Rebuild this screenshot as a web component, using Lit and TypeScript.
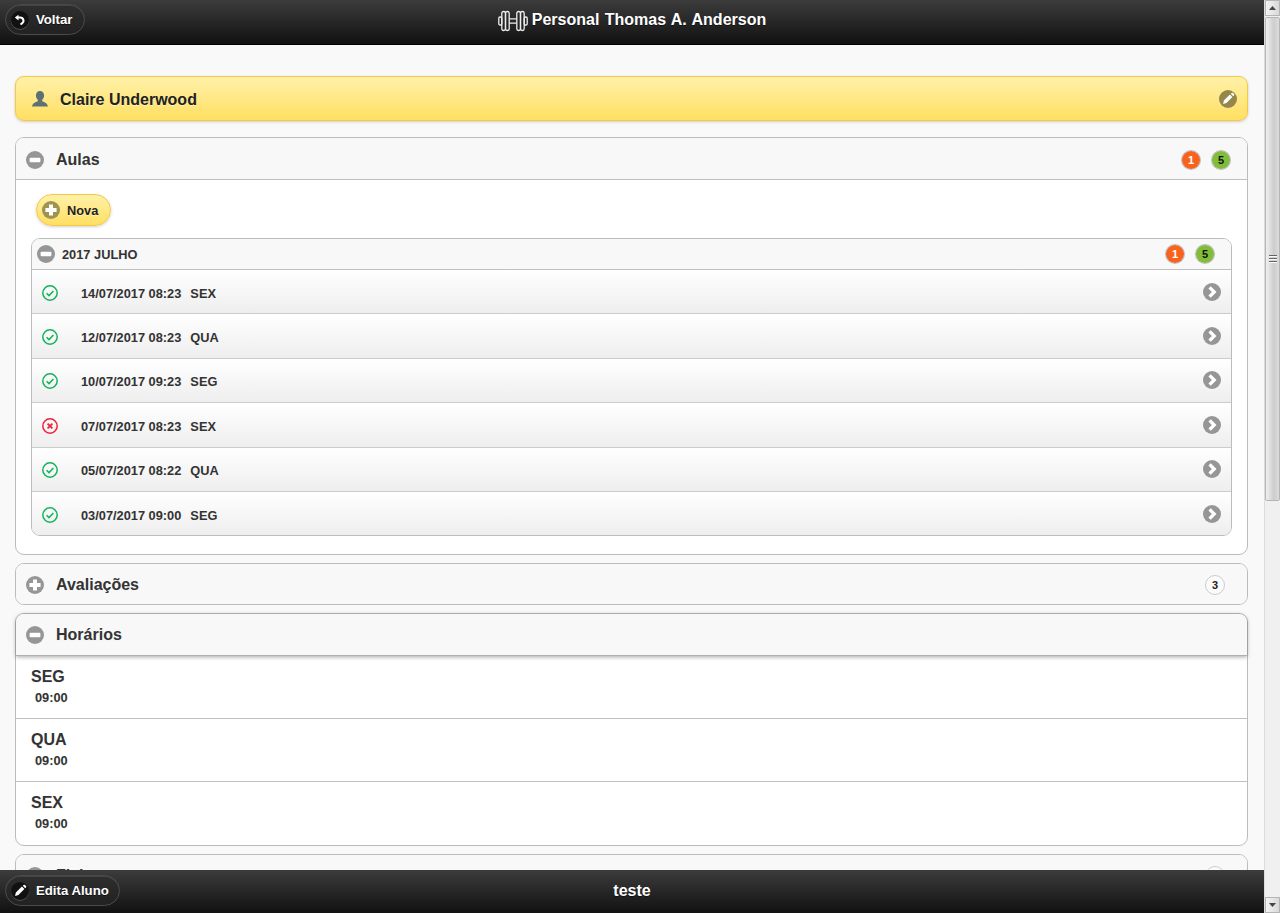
import { LitElement, html, css, svg } from "lit";
import { customElement } from "lit/decorators.js";

const disc = (inner: unknown, size = 18, fill = "#969696", cls = "") => html`<svg class=${cls} width=${size} height=${size} viewBox="0 0 18 18" aria-hidden="true"><circle cx="9" cy="9" r="9" fill=${fill}></circle>${inner}</svg>`;
const minus = svg`<rect x="3.6" y="6.8" width="10.8" height="4.4" rx="1" fill="#fff"/>`;
const plus = svg`<path d="M7 3.400h4V7h3.600v4H11v3.600H7V11H3.400V7H7z" fill="#fff"/>`;
const chevron = svg`<path d="M6.600 4.400 11.200 9l-4.600 4.600" fill="none" stroke="#fff" stroke-width="3.300"/>`;
const pencil = svg`<path d="M4 14l.9-3.400 6-6 2.500 2.500-6 6zM11.800 3.800l.8-.8a1 1 0 0 1 1.400 0l1 1a1 1 0 0 1 0 1.400l-.8.8z" fill="#fff"/>`;

const okIcon = html`<svg class="st" width="16" height="16" viewBox="0 0 16 16" aria-hidden="true"><circle cx="8" cy="8" r="7.200" fill="none" stroke="#12b35d" stroke-width="1.500"></circle><path d="M4.600 8.200l2.400 2.400 4.400-4.600" fill="none" stroke="#12b35d" stroke-width="1.500"></path></svg>`;
const noIcon = html`<svg class="st" width="16" height="16" viewBox="0 0 16 16" aria-hidden="true"><circle cx="8" cy="8" r="7.200" fill="none" stroke="#f0203a" stroke-width="1.500"></circle><path d="M5.600 5.600l4.800 4.800M10.400 5.600l-4.800 4.800" fill="none" stroke="#f0203a" stroke-width="1.800"></path></svg>`;

const rows = [
  ["14/07/2017 08:23", "SEX", true],
  ["12/07/2017 08:23", "QUA", true],
  ["10/07/2017 09:23", "SEG", true],
  ["07/07/2017 08:23", "SEX", false],
  ["05/07/2017 08:22", "QUA", true],
  ["03/07/2017 09:00", "SEG", true],
] as const;

@customElement("app-root")
export class AppRoot extends LitElement {
  static styles = css`
    :host { display: flex; width: 1280px; height: 913px; overflow: hidden; font-family: "Liberation Sans", Arial, sans-serif; color: #333; background: #f9f9f9; }
    .page { width: 1264px; display: flex; flex-direction: column; height: 913px; }
    .bar { flex: none; background: linear-gradient(#3c3c3c, #111); color: #fff; display: flex; align-items: center; position: relative; text-shadow: 0 1px 0 #111; font-weight: 700; }
    .top { height: 44px; border-bottom: 1px solid #000; }
    .bottom { height: 43px; }
    .btn { position: absolute; left: 5px; display: flex; align-items: center; gap: 7px; height: 29px; padding: 0 10px 0 5px; border: 1px solid #4a4a4a; border-radius: 16px; background: linear-gradient(#2e2e2e, #222); box-shadow: inset 0 1px 0 #444; font-size: 13.200px; }
    .top .btn { top: 4px; padding-right: 12px; }
    .bottom .btn { top: 5px; }
    .bi { width: 18px; height: 18px; border-radius: 50%; background: #111; box-shadow: 0 1px 0 rgba(255,255,255,.2); display: flex; align-items: center; justify-content: center; }
    .title { flex: 1; display: flex; align-items: center; justify-content: center; font-size: 16px; gap: 4px; padding-bottom: 4px; }
    .title svg { margin-top: 2px; }
    .title span { word-spacing: .9px; }
    .foot-title { flex: 1; text-align: center; font-size: 16px; padding-bottom: 2px; }
    main { flex: 1; min-height: 0; overflow: hidden; padding: 31px 16px 0 15px; display: flex; flex-direction: column; }
    .student { flex: none; height: 43px; display: flex; align-items: center; border: 1px solid #f6c944; border-radius: 9px; background: linear-gradient(#fff1a9, #ffdf62); box-shadow: 0 1px 3px rgba(0,0,0,.18); padding: 0 10px 0 15px; font-size: 16px; font-weight: 700; color: #222; text-shadow: 0 1px 0 #fff3b0; }
    .student .name { flex: 1; margin: 2px 0 0 11px; }
    .panel { flex: none; margin-top: 16px; border: 1px solid #bcbcbc; border-radius: 9px; background: #fff; overflow: hidden; }
    .panel + .panel { margin-top: 8px; }
    .panel.lift { overflow: visible; }
    .ph { height: 39px; display: flex; align-items: center; padding: 1px 22px 0 10px; background: #f8f8f8; font-size: 16px; font-weight: 700; text-shadow: 0 1px 0 #f3f3f3; gap: 12px; }
    .ph.line { height: 39px; padding: 2px 16px 0 10px; border-bottom: 1px solid #c0c0c0; }
    .ph.raised { height: 40px; border-bottom: 1px solid #b0b0b0; border-radius: 8px 8px 0 0; box-shadow: 0 1px 4px rgba(0,0,0,.35); position: relative; }
    .ph .grow { flex: 1; }
    .badges { display: flex; gap: 10px; }
    .badge { width: 18px; height: 18px; border-radius: 50%; border: 1px solid rgba(120,120,120,.45); display: flex; align-items: center; justify-content: center; font-size: 11px; font-weight: 700; text-shadow: none; background-clip: padding-box; }
    .red { background-color: #f9621c; color: #fff; }
    .green { background-color: #82bd3a; color: #111; }
    .white { background-color: #fbfbfb; color: #222; border-color: #ccc; }
    .body { padding: 14px 15px 18px; }
    .nova { display: inline-flex; align-items: center; gap: 7px; height: 30px; margin-left: 5px; padding: 0 12px 0 5px; border: 1px solid #f6c944; border-radius: 16px; background: linear-gradient(#fff1a9, #ffdf62); box-shadow: 0 1px 3px rgba(0,0,0,.18); font-size: 12.800px; font-weight: 700; color: #222; text-shadow: 0 1px 0 #fff3b0; vertical-align: top; }
    .inner { margin-top: 12px; border: 1px solid #bcbcbc; border-radius: 9px; overflow: hidden; background: #fff; }
    .ih { height: 30px; display: flex; align-items: center; padding: 0 16px 0 5px; gap: 7px; background: #f8f8f8; border-bottom: 1px solid #c0c0c0; font-size: 12.800px; font-weight: 700; text-shadow: 0 1px 0 #f3f3f3; }
    .ih .grow { flex: 1; }
    .row { height: 43.400px; display: flex; align-items: center; padding: 0 10px; background: linear-gradient(#fff, #eeeeee); border-bottom: 1px solid #ccc; font-size: 12.800px; font-weight: 700; text-shadow: 0 1px 0 #f3f3f3; }
    .row:last-child { border-bottom: 0; }
    .st { flex: none; margin-top: 2px; }
    .date { margin: 3px 0 0 23px; }
    .day { margin: 3px 0 0 9px; flex: 1; }
    .slot { height: 63px; border-bottom: 1px solid #c0c0c0; padding: 12px 0 0 15px; box-sizing: border-box; }
    .slot:last-child { border-bottom: 0; }
    .slot b { display: block; font-size: 16px; line-height: 18px; text-shadow: 0 1px 0 #f3f3f3; }
    .slot i { display: block; font-style: normal; font-weight: 700; font-size: 12.800px; line-height: 15px; margin: 4px 0 0 4px; text-shadow: 0 1px 0 #f3f3f3; }
    .sb { flex: none; width: 16px; height: 913px; background: #f0f0f0; border-left: 1px solid #dcdcdc; box-sizing: border-box; display: flex; flex-direction: column; gap: 1px; }
    .sb .arrow { height: 16px; flex: none; border: 1px solid #b5b5b5; box-sizing: border-box; background: linear-gradient(90deg, #f4f4f4, #d8d8d8); display: flex; align-items: center; justify-content: center; }
    .sb .thumb { height: 484px; flex: none; border: 1px solid #b5b5b5; border-radius: 2px; box-sizing: border-box; background: linear-gradient(90deg, #f0f0f0, #cdcdcd 60%, #dcdcdc); display: flex; align-items: center; justify-content: center; }
    .sb .grow { flex: 1; }
  `;

  render() {
    return html`
      <div class="page">
        <header class="bar top">
          <div class="btn"><span class="bi"><svg width="12" height="12" viewBox="0 0 12 12" aria-hidden="true"><path d="M4.500 .8.800 3.500l3.700 2.900z" fill="#fff"></path><path d="M4 3.500h2.200a3.200 3.200 0 0 1 1.600 6L6.500 10.600" fill="none" stroke="#fff" stroke-width="2"></path></svg></span>Voltar</div>
          <div class="title">
            <svg width="30" height="22" viewBox="0 0 30 22" fill="none" stroke="#eee" stroke-width="1.300" aria-hidden="true"><rect x=".8" y="7" width="3" height="8" rx="1.200"></rect><rect x="26.200" y="7" width="3" height="8" rx="1.200"></rect><rect x="3.800" y="1.500" width="3.700" height="19" rx="1.800"></rect><rect x="7.500" y="1.500" width="3.700" height="19" rx="1.800"></rect><rect x="22.500" y="1.500" width="3.700" height="19" rx="1.800"></rect><rect x="18.800" y="1.500" width="3.700" height="19" rx="1.800"></rect><path d="M11.200 8.800h7.600M11.200 13.200h7.600"></path></svg>
            <span>Personal Thomas A. Anderson</span>
          </div>
        </header>
        <main>
          <div class="student">
            <svg width="18" height="18" viewBox="0 0 18 18" aria-hidden="true"><path d="M9 1c2.500 0 4.100 1.900 4.100 4.400 0 1.900-.9 3.500-1.900 4.400v1.500c1.600.8 5 1.300 5.800 5.200H1c.8-3.900 4.200-4.400 5.800-5.200V9.800C5.800 8.900 4.900 7.300 4.900 5.400 4.900 2.900 6.500 1 9 1z" fill="#5d7076"></path></svg>
            <span class="name">Claire Underwood</span>
            ${disc(pencil, 18, "#95874b")}
          </div>

          <section class="panel">
            <div class="ph line">${disc(minus)}<span class="grow">Aulas</span>
              <div class="badges"><span class="badge red">1</span><span class="badge green">5</span></div></div>
            <div class="body">
              <div class="nova">${disc(plus, 18, "#a0924f")}<span>Nova</span></div>
              <div class="inner">
                <div class="ih">${disc(minus)}<span class="grow">2017 JULHO</span>
                  <div class="badges"><span class="badge red">1</span><span class="badge green">5</span></div></div>
                ${rows.map(([d, w, ok]) => html`<div class="row">${ok ? okIcon : noIcon}<span class="date">${d}</span><span class="day">${w}</span>${disc(chevron)}</div>`)}
              </div>
            </div>
          </section>

          <section class="panel">
            <div class="ph">${disc(plus)}<span class="grow">Avaliações</span><span class="badge white">3</span></div>
          </section>

          <section class="panel lift">
            <div class="ph raised">${disc(minus)}<span class="grow">Horários</span></div>
            ${["SEG", "QUA", "SEX"].map((d) => html`<div class="slot"><b>${d}</b><i>09:00</i></div>`)}
          </section>

          <section class="panel">
            <div class="ph">${disc(plus)}<span class="grow">Fichas</span><span class="badge white">2</span></div>
          </section>
        </main>
        <footer class="bar bottom">
          <div class="btn"><span class="bi"><svg width="14" height="14" viewBox="2 2 14 14" aria-hidden="true">${pencil}</svg></span>Edita Aluno</div>
          <div class="foot-title">teste</div>
        </footer>
      </div>
      <div class="sb" aria-hidden="true">
        <div class="arrow"><svg width="7" height="4" viewBox="0 0 7 4"><path d="M3.500 0 7 4H0z" fill="#444"></path></svg></div>
        <div class="thumb"><svg width="8" height="8" viewBox="0 0 8 8"><path d="M0 .5h8M0 3.500h8M0 6.500h8" stroke="#666"></path><path d="M0 1.500h8M0 4.500h8M0 7.500h8" stroke="#fafafa"></path></svg></div>
        <div class="grow"></div>
        <div class="arrow"><svg width="7" height="4" viewBox="0 0 7 4"><path d="M0 0h7L3.500 4z" fill="#444"></path></svg></div>
      </div>
    `;
  }
}
